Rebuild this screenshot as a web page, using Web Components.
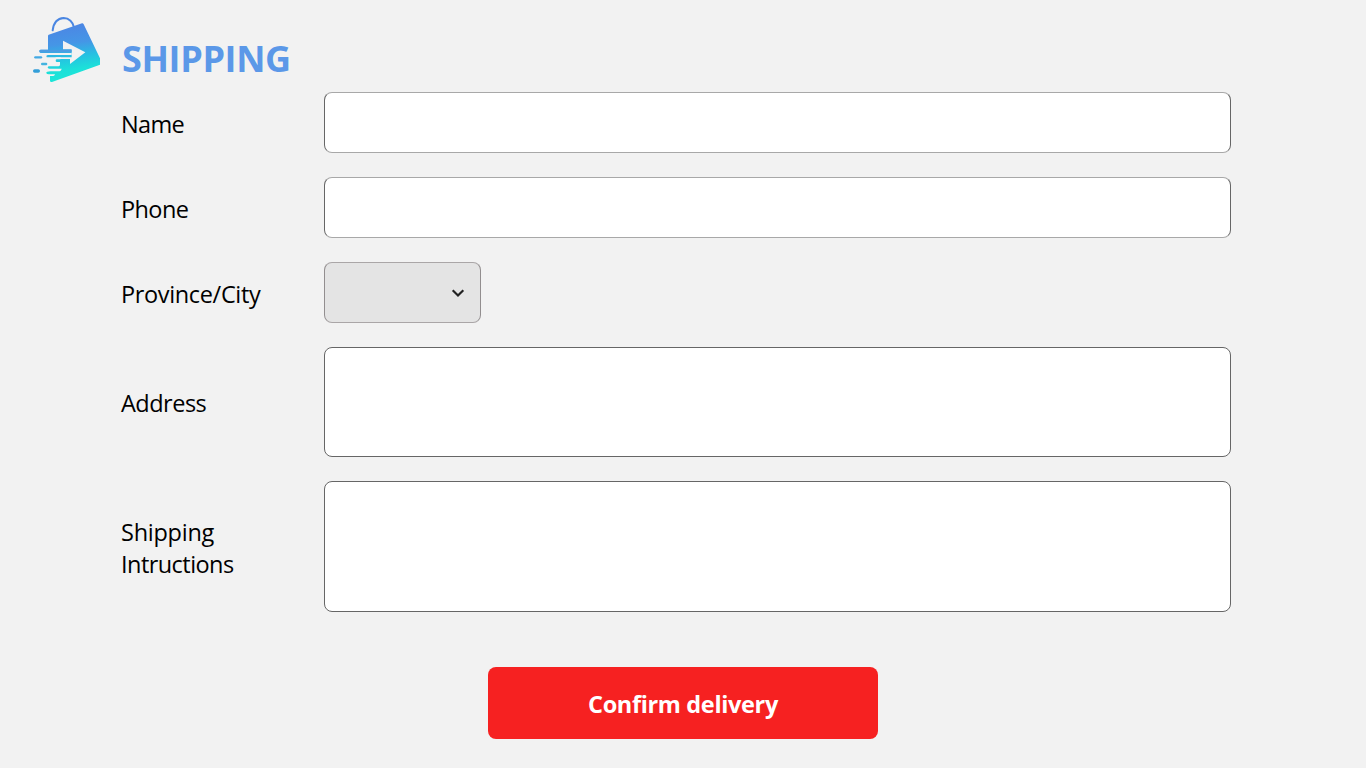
<!DOCTYPE html>
<html lang="en"><head><meta charset="utf-8"><title>Shipping</title>
<style>html,body{margin:0;height:100%;background:#f2f2f2;overflow:hidden}</style></head>
<body><shipping-page></shipping-page>
<script>
const define = (name, html) => customElements.define(name, class extends HTMLElement {
  constructor() {
    super();
    const t = document.createElement('template');
    t.innerHTML = html;
    this.attachShadow({mode: 'open'}).append(t.content.cloneNode(true));
  }
});
define('shop-logo', `<style>:host{display:block;width:84px;height:80px}svg{display:block}</style>
<svg width="84" height="80" viewBox="0 0 252 240"><defs><linearGradient id="g" gradientUnits="userSpaceOnUse" x1="130" y1="45" x2="150" y2="200"><stop offset="0" stop-color="#4c86e4"/><stop offset=".35" stop-color="#4596e6"/><stop offset=".6" stop-color="#27bfe2"/><stop offset=".85" stop-color="#1ce0d9"/><stop offset="1" stop-color="#1ce5d8"/></linearGradient></defs>
<path d="M80 61C83 37 95 25 113 24c16 0 28 12 31 28" fill="none" stroke="#4a86e2" stroke-width="6" stroke-linecap="round"/>
<path fill="url(#g)" d="M68 74L168 40q3-1 5 3L222 145v19L78 216q-6 1-6-4v-14h10q5-1 5-5h-14q-12 0-12-4.500t12-4.500h28q5-2 6-8H70q-5 0-5-3.500t5-3.500h28q4-1 4-5V156H93q-4 0-4-4t4-4h10q4-5 0-6H67q-6 0-6-3.500t6-3.500h70v-6H44q-4 0-4-5t4-5h22V78q0-3 2-4z"/>
<path fill="#f2f2f2" d="M111 92l67 35-46 35v-15H89v-5h48V118H111z"/>
<path fill="none" stroke="#4b9ce2" stroke-width="8" stroke-linecap="round" d="M44 123h89"/>
<path fill="none" stroke="#43a9e4" stroke-width="7" stroke-linecap="round" d="M28 142h17"/>
<path fill="none" stroke="#45b3df" stroke-width="8" stroke-linecap="round" d="M49 162h11"/>
<path fill="none" stroke="#349fd9" stroke-width="10" stroke-linecap="round" d="M26 183h11"/>
</svg>`);
define('page-header', `<style>:host{display:flex;height:92px;padding-left:26px;box-sizing:border-box}shop-logo{margin-top:10px}
h1{margin:33px 0 0 12px;font:700 36px/52px "Open Sans",sans-serif;letter-spacing:-.38px;color:#5b98e8;white-space:nowrap}</style><shop-logo></shop-logo><h1><slot></slot></h1>`);
define('form-row', `<style>:host{display:grid;grid-template-columns:203px 1fr;align-items:center}
.label{font:400 23.5px/32px "Open Sans",sans-serif;color:#000;padding-top:var(--label-drop,3px);letter-spacing:var(--track,-.5px)}</style><div class="label"><slot name="label"></slot></div><slot></slot>`);
define('text-field', `<style>:host{display:block;box-sizing:border-box;height:var(--h,61px);background:#fff;border:1px solid #666;border-top-color:var(--edge,#666);border-bottom-color:var(--edge,#666);border-radius:8px}</style>`);
define('select-field', `<style>:host{display:flex;box-sizing:border-box;align-items:center;justify-content:flex-end;width:157px;height:61px;padding:1px 15px 0 0;background:#e4e4e4;border:1px solid #928e8f;border-top-color:#aaa6a7;border-bottom-color:#aaa6a7;border-radius:8px}</style>
<svg width="14" height="10" viewBox="0 0 14 10"><path d="M1.700 2.300L7 7.500l5.300-5.200" fill="none" stroke="#222" stroke-width="2.200"/></svg>`);
define('action-button', `<style>:host{display:block}button{display:block;width:390px;height:72px;padding:2px 0 0;border:0;border-radius:8px;background:#f62121;color:#fff;font:700 23.5px/32px "Open Sans",sans-serif;letter-spacing:-.35px}</style><button><slot></slot></button>`);
define('shipping-page', `<style>:host{display:flex;flex-direction:column;width:1366px;height:768px;background:#f2f2f2}
main{display:flex;flex-direction:column;gap:24px;margin:0 135px 0 121px}
.short{--edge:#a8a8a8}.name{--track:-.65px}.phone{--track:-.6px}.city{--track:-.35px}
.address{--h:110px;--label-drop:2px}.notes{--h:131px;--label-drop:3px;--track:-.55px}
.first-line{letter-spacing:-.25px}
action-button{align-self:center;margin-top:55px}</style>
<page-header>SHIPPING</page-header><main>
<form-row class="short name"><span slot="label">Name</span><text-field></text-field></form-row>
<form-row class="short phone"><span slot="label">Phone</span><text-field></text-field></form-row>
<form-row class="city"><span slot="label">Province/City</span><select-field></select-field></form-row>
<form-row class="address"><span slot="label">Address</span><text-field></text-field></form-row>
<form-row class="notes"><span slot="label"><span class="first-line">Shipping</span><br>Intructions</span><text-field></text-field></form-row>
</main><action-button>Confirm delivery</action-button>`);
</script></body></html>
